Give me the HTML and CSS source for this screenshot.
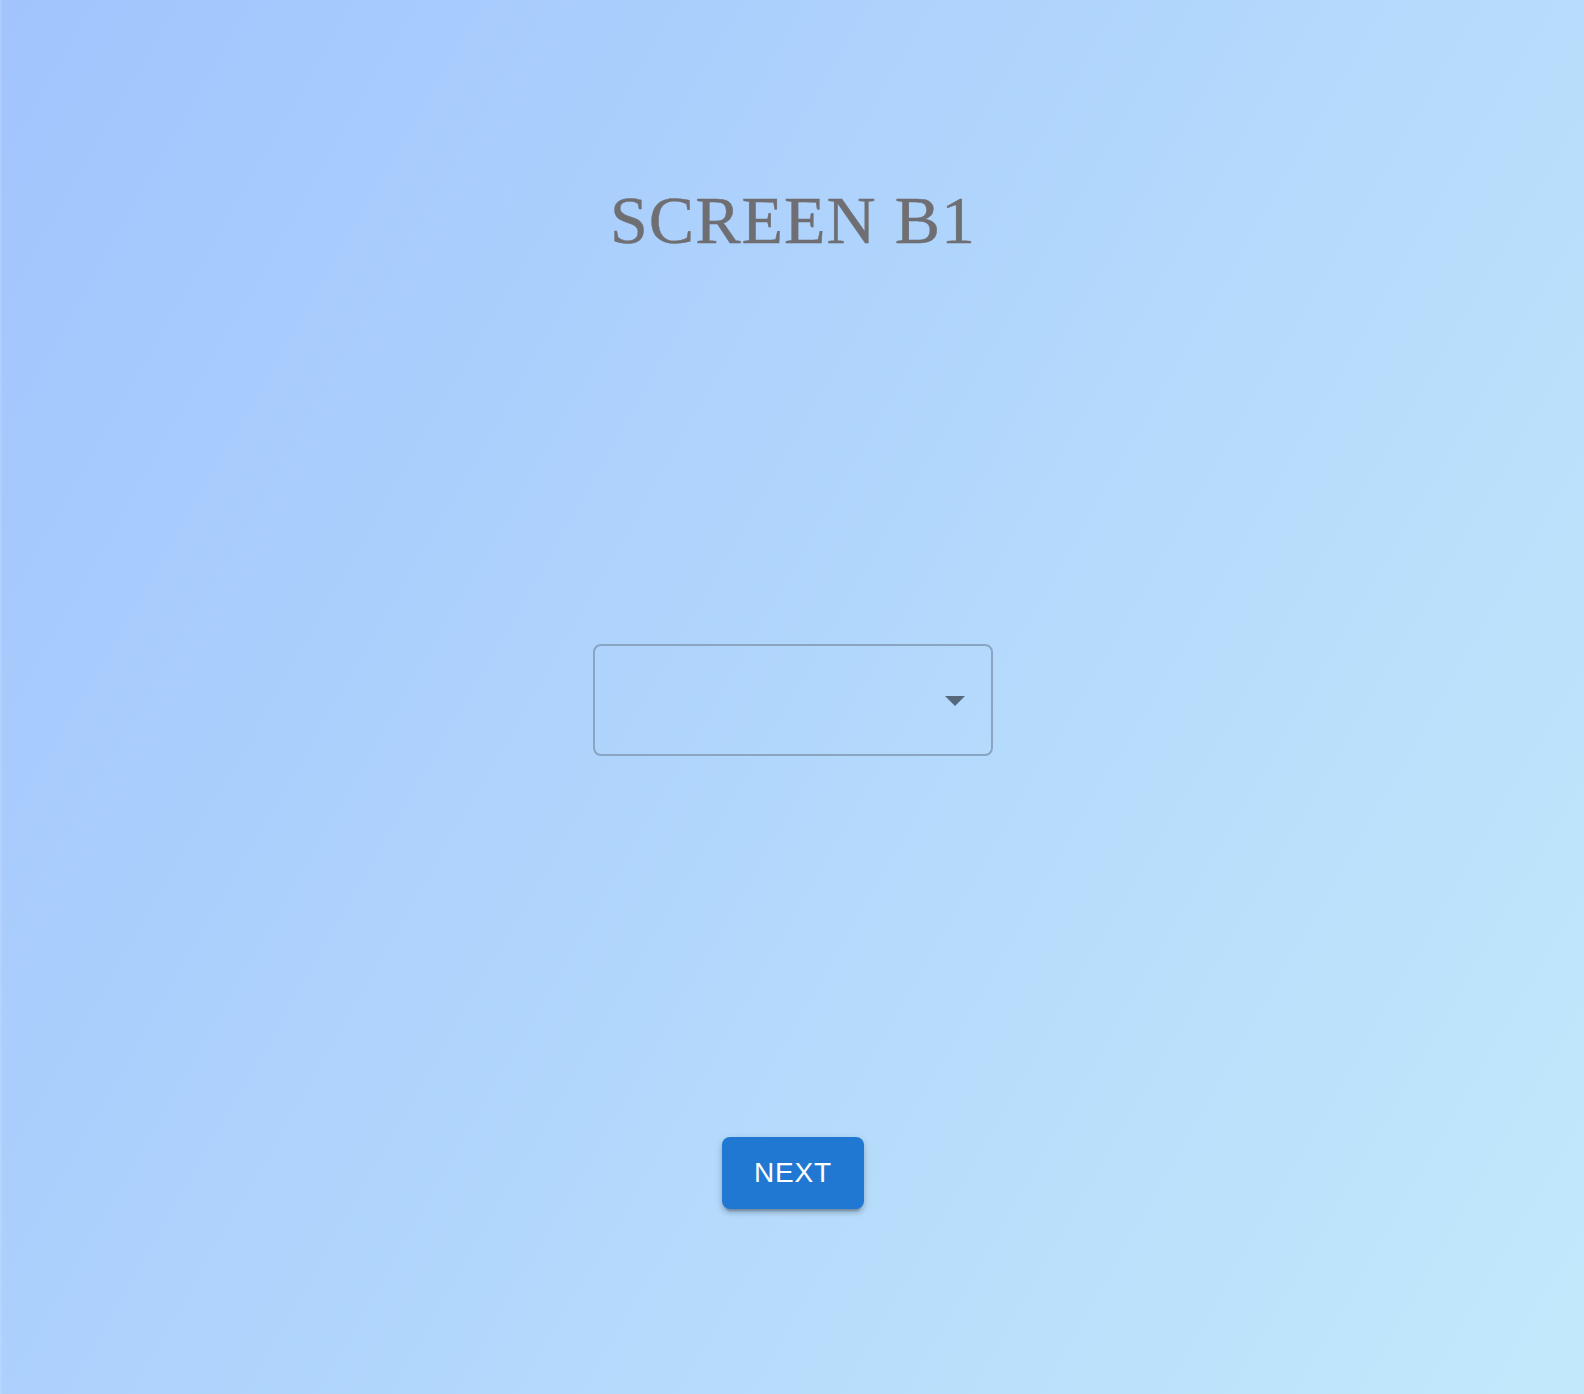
FILE: index.html
```html
<!DOCTYPE html>
<html lang="en">
<head>
<meta charset="utf-8">
<title>Screen B1</title>
<link rel="stylesheet" href="styles.css">
</head>
<body>
<main class="screen">
  <h1 class="title">SCREEN B1</h1>
  <div class="select" role="button" aria-haspopup="listbox">
    <span class="select-value"></span>
    <svg class="select-icon" viewBox="0 0 24 24" width="48" height="48" aria-hidden="true"><path d="M7 10l5 5 5-5z"/></svg>
  </div>
  <button class="next-btn" type="button">NEXT</button>
</main>
</body>
</html>
```

FILE: styles.css
```css
html, body {
  margin: 0;
  padding: 0;
  height: 100%;
}

body {
  background: linear-gradient(120deg, #a1c4fd 0%, #c2e9fb 100%);
  font-family: "Liberation Sans", Arial, sans-serif;
  min-height: 1394px;
  box-sizing: border-box;
  border-left: 2px solid rgba(255, 255, 255, 0.12);
}

.screen {
  display: flex;
  flex-direction: column;
  align-items: center;
  padding-top: 180px;
}

.title {
  margin: 0;
  font-family: "Liberation Serif", "Times New Roman", serif;
  font-weight: 400;
  font-size: 68px;
  line-height: 80px;
  color: #6f6f73;
  letter-spacing: 1px;
  -webkit-text-stroke: 0.4px #6f6f73;
}

.select {
  margin-top: 384px;
  box-sizing: border-box;
  width: 400px;
  height: 112px;
  border: 2px solid #8aa5c1;
  border-radius: 8px;
  display: flex;
  align-items: center;
  justify-content: flex-end;
  padding-right: 12px;
}

.select-icon {
  fill: #56687a;
  display: block;
}

.next-btn {
  margin-top: 381px;
  box-sizing: border-box;
  height: 72px;
  min-width: 128px;
  padding: 12px 32px;
  border: none;
  border-radius: 8px;
  background: #2178d2;
  color: #ffffff;
  font-family: "Liberation Sans", Arial, sans-serif;
  font-size: 28px;
  font-weight: 400;
  letter-spacing: 0.8px;
  line-height: 48px;
  box-shadow: 0 6px 2px -4px rgba(0,0,0,0.2), 0 4px 4px 0 rgba(0,0,0,0.14), 0 2px 10px 0 rgba(0,0,0,0.12);
  cursor: pointer;
}
```
